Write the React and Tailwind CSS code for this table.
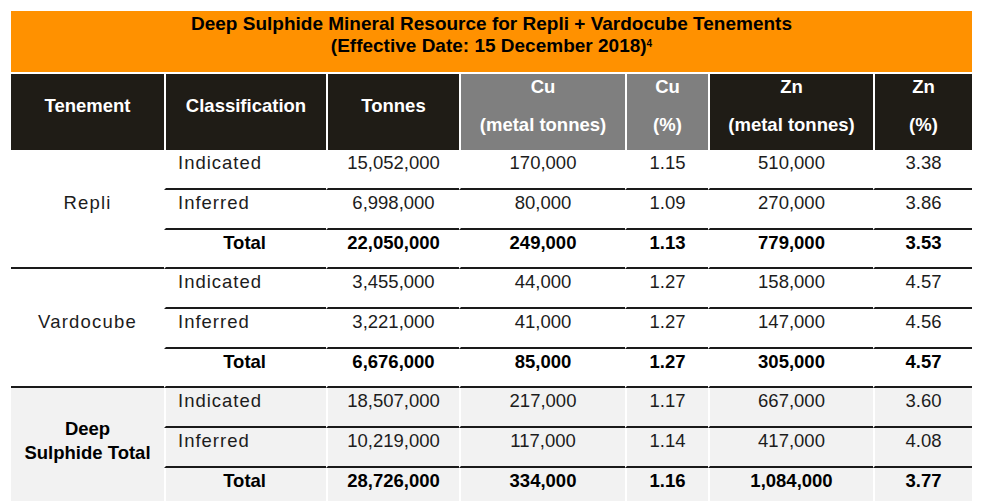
const cols = 'grid grid-cols-[153px_162px_133px_166px_83px_165px_99px]';

const groups = [
  {
    name: 'Repli',
    rows: [
      ['Indicated', '15,052,000', '170,000', '1.15', '510,000', '3.38'],
      ['Inferred', '6,998,000', '80,000', '1.09', '270,000', '3.86'],
      ['Total', '22,050,000', '249,000', '1.13', '779,000', '3.53'],
    ],
  },
  {
    name: 'Vardocube',
    rows: [
      ['Indicated', '3,455,000', '44,000', '1.27', '158,000', '4.57'],
      ['Inferred', '3,221,000', '41,000', '1.27', '147,000', '4.56'],
      ['Total', '6,676,000', '85,000', '1.27', '305,000', '4.57'],
    ],
  },
  {
    name: ['Deep', 'Sulphide Total'],
    shaded: true,
    rows: [
      ['Indicated', '18,507,000', '217,000', '1.17', '667,000', '3.60'],
      ['Inferred', '10,219,000', '117,000', '1.14', '417,000', '4.08'],
      ['Total', '28,726,000', '334,000', '1.16', '1,084,000', '3.77'],
    ],
  },
];

const HeadCell = ({ top, bottom, gray, first }) => (
  <div
    className={
      'flex flex-col items-center justify-center gap-[16px] pb-[12px] ' +
      (gray ? 'bg-[#7f7f7f] ' : 'bg-[#1f1c16] ') +
      (first ? '' : 'border-l-2 border-white')
    }
  >
    <span className="leading-[22px]">{top}</span>
    {bottom && <span className="leading-[22px]">{bottom}</span>}
  </div>
);

const Group = ({ name, rows, shaded }) => {
  const bg = shaded ? 'bg-[#f2f2f2] ' : 'bg-white ';
  return (
    <div className={cols + ' grid-rows-[40px_40px_39px]'}>
      <div
        className={
          bg +
          'row-span-3 flex flex-col items-center justify-center border-b-2 border-[#1a1a1a] pb-[11px] text-center'
        }
      >
        {Array.isArray(name) ? (
          name.map((n) => (
            <span key={n} className="font-bold leading-[24px] text-black">
              {n}
            </span>
          ))
        ) : (
          <span className="leading-[26px] tracking-[1.2px]">{name}</span>
        )}
      </div>
      {rows.map((r) => {
        const total = r[0] === 'Total';
        return r.map((v, i) => (
          <div
            key={r[0] + i}
            className={
              bg +
              'border-b-2 border-l-2 border-l-white border-b-[#1a1a1a] leading-[26px] ' +
              (total ? 'font-bold text-black ' : '') +
              (i === 0
                ? total
                  ? 'pr-[60px] text-right'
                  : 'pl-[12px] tracking-[1px]'
                : 'text-center')
            }
          >
            {v}
          </div>
        ));
      })}
    </div>
  );
};

export default function App() {
  return (
    <div className="min-h-screen bg-white pl-[11px] pt-[11px] font-['Liberation_Sans',Arial,sans-serif] text-[18.5px] text-[#1c1c1c]">
      <div className="w-[961px]">
        <div className="h-[61px] bg-[#ff9100] pt-[2px] text-center text-[19px] font-bold leading-[22px] text-black">
          <div>Deep Sulphide Mineral Resource for Repli + Vardocube Tenements</div>
          <div>
            (Effective Date: 15 December 2018)<sup className="text-[10px]">4</sup>
          </div>
        </div>
        <div className={cols + ' mt-[2px] h-[76px] font-bold text-white'}>
          <HeadCell top="Tenement" first />
          <HeadCell top="Classification" />
          <HeadCell top="Tonnes" />
          <HeadCell top="Cu" bottom="(metal tonnes)" gray />
          <HeadCell top="Cu" bottom="(%)" gray />
          <HeadCell top="Zn" bottom="(metal tonnes)" />
          <HeadCell top="Zn" bottom="(%)" />
        </div>
        {groups.map((g, i) => (
          <Group key={i} {...g} />
        ))}
      </div>
    </div>
  );
}
